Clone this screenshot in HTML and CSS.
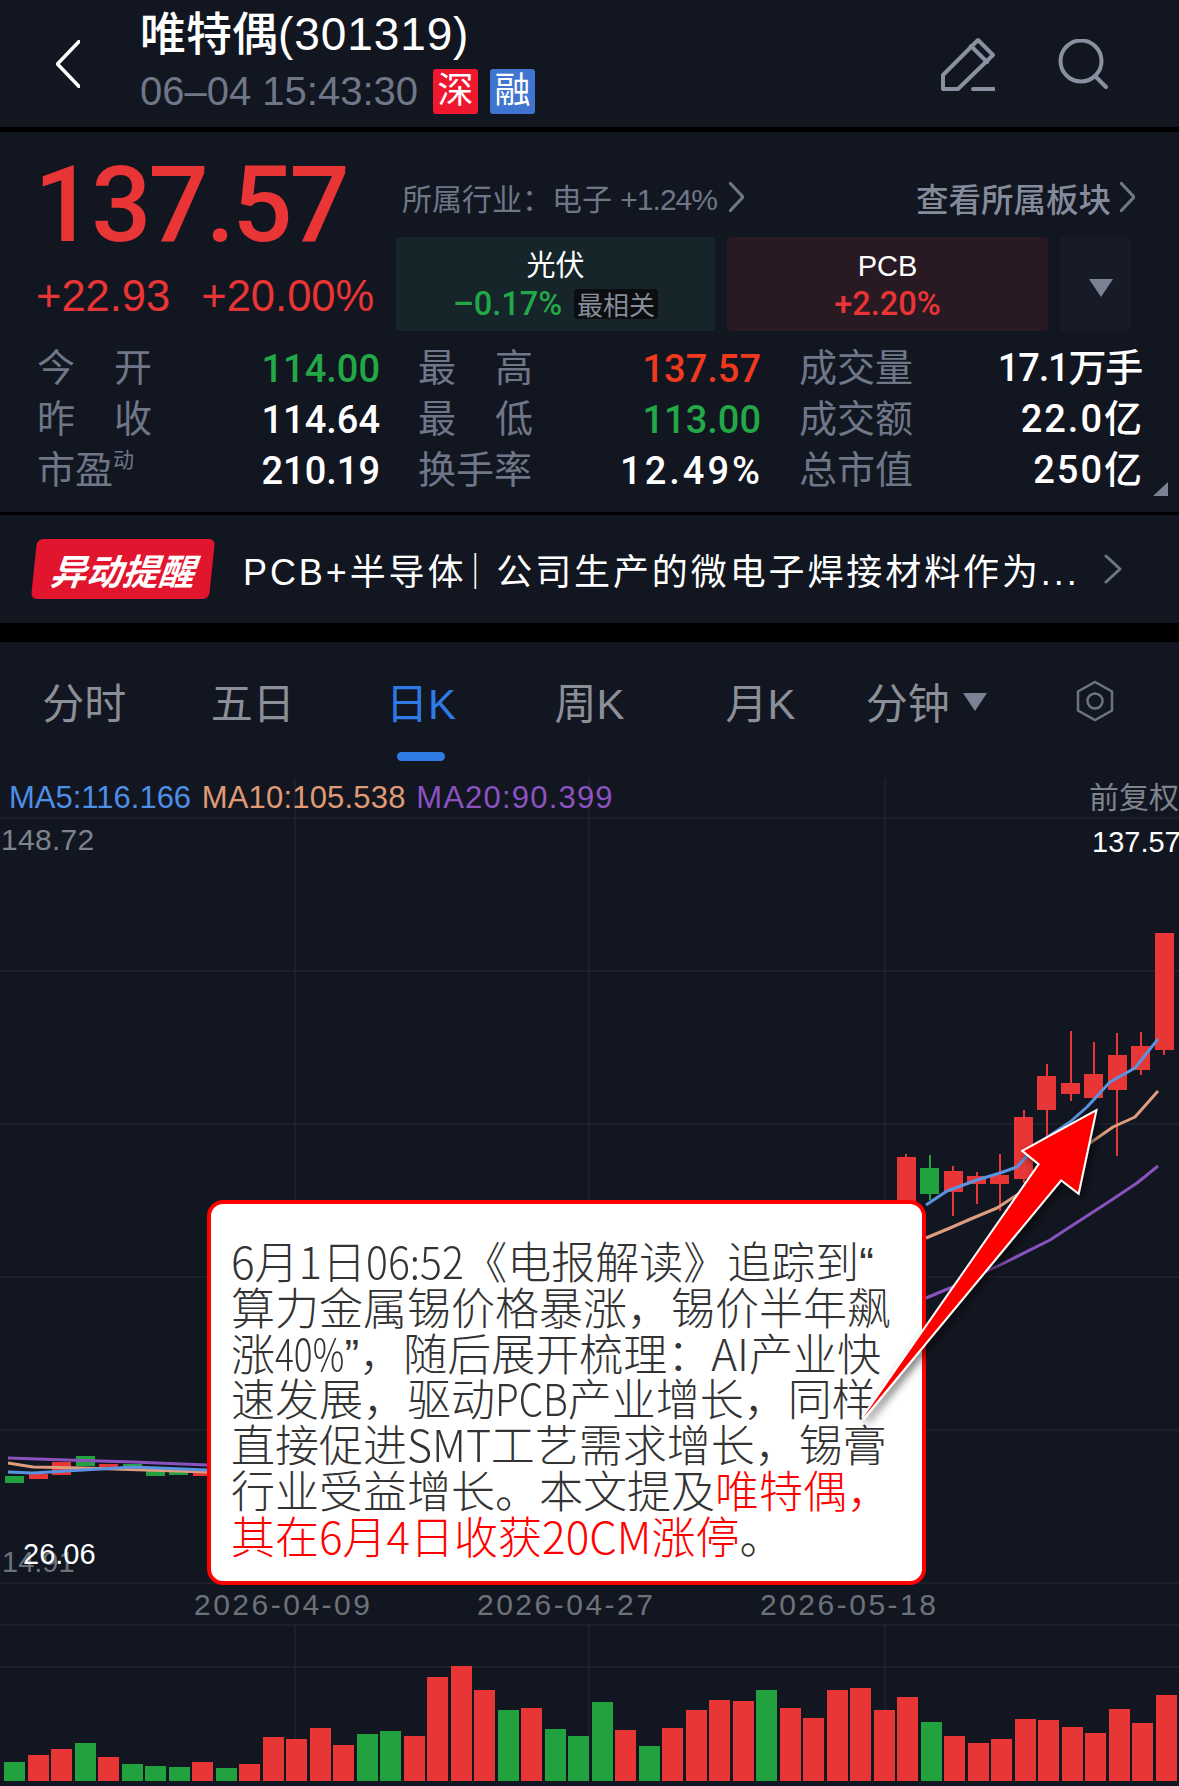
FILE: index.html
```html
<!DOCTYPE html>
<html lang="zh-CN">

<head>
    <meta charset="utf-8">
    <title>唯特偶(301319)</title>
    <link rel="stylesheet" href="styles.css">
</head>

<body>
    <header class="topbar">
        <svg class="back-icon" viewBox="0 0 24 48"><path d="M23 1.500 L1.500 24 L23 46.500"/></svg>
        <div class="stock-name">
            <div class="stock-title">唯特偶<span class="code">(301319)</span></div>
            <div class="stock-sub">
                <span class="stock-time">06–04 15:43:30</span>
                <span class="badge badge-red">深</span>
                <span class="badge badge-blue">融</span>
            </div>
        </div>
        <svg class="edit-icon" viewBox="0 0 54 54"><path d="M2 52 V38 L37 3 L52 18 L17 52 Z M30 9 L46 25"/><path d="M32 52 H53"/></svg>
        <svg class="search-icon" viewBox="0 0 50 50"><circle cx="23" cy="22" r="20.500"/><path d="M37 37 L48 48"/></svg>
    </header>

    <section class="quote">
        <div class="quote-top">
            <div class="price-box">
                <div class="price">137.57</div>
                <div class="change"><span>+22.93</span><span>+20.00%</span></div>
            </div>
            <div class="sector-box">
                <div class="sector-line">
                    <span class="industry">所属行业：电子 <span class="industry-pct">+1.24%</span></span>
                    <svg class="chevron-sm" viewBox="0 0 15 30"><path d="M1 1 L14 15 L1 29"/></svg>
                    <span class="all-sectors">查看所属板块</span>
                    <svg class="chevron-sm" viewBox="0 0 15 30"><path d="M1 1 L14 15 L1 29"/></svg>
                </div>
                <div class="sector-cards">
                    <div class="card card-green">
                        <div class="card-name">光伏</div>
                        <div class="card-pct"><span class="green">–0.17%</span><span class="card-tag">最相关</span></div>
                    </div>
                    <div class="card card-red">
                        <div class="card-name">PCB</div>
                        <div class="card-pct"><span class="red">+2.20%</span></div>
                    </div>
                    <div class="card card-more"><i class="tri"></i></div>
                </div>
            </div>
        </div>
        <div class="stats">
            <div class="stat"><span class="stat-label spread"><b>今</b><b>开</b></span><span class="stat-val green">114.00</span></div>
            <div class="stat"><span class="stat-label spread"><b>最</b><b>高</b></span><span class="stat-val high">137.57</span></div>
            <div class="stat"><span class="stat-label">成交量</span><span class="stat-val cjk-val vol-val">17.1万手</span></div>
            <div class="stat"><span class="stat-label spread"><b>昨</b><b>收</b></span><span class="stat-val">114.64</span></div>
            <div class="stat"><span class="stat-label spread"><b>最</b><b>低</b></span><span class="stat-val green">113.00</span></div>
            <div class="stat"><span class="stat-label">成交额</span><span class="stat-val cjk-val wide">22.0亿</span></div>
            <div class="stat"><span class="stat-label">市盈<sup>动</sup></span><span class="stat-val">210.19</span></div>
            <div class="stat"><span class="stat-label">换手率</span><span class="stat-val wide wide-pct">12.49%</span></div>
            <div class="stat"><span class="stat-label">总市值</span><span class="stat-val cjk-val wide">250亿</span><i class="corner"></i></div>
        </div>
    </section>

    <section class="alert">
        <div class="alert-tag"><span>异动提醒</span></div>
        <div class="alert-text">PCB+半导体<span class="alert-sep">｜</span>公司生产的微电子焊接材料作为...</div>
        <svg class="chevron-lg" viewBox="0 0 18 30"><path d="M2 2 L16 15 L2 28"/></svg>
    </section>

    <main class="chart">
        <svg class="plot" viewBox="0 642 1179 1144">
            <g class="grid">
                <path d="M0 818 H1179 M0 971 H1179 M0 1124 H1179 M0 1277 H1179 M0 1430 H1179 M0 1583 H1179 M0 1625 H1179 M0 1667 H1179"/>
                <path d="M295 778 V1583 M589 778 V1583 M885 778 V1583 M295 1625 V1781 M589 1625 V1781 M885 1625 V1781"/>
            </g>
            <g class="up">
                <rect x="29" y="1474" width="19" height="5"/>
                <rect x="52" y="1462" width="19" height="13"/>
                <rect x="99" y="1464" width="19" height="3"/>
                <rect x="193" y="1470" width="19" height="6"/>
                <rect x="905" y="1154" width="2" height="50"/><rect x="897" y="1157" width="19" height="46"/>
                <rect x="952" y="1166" width="2" height="50"/><rect x="944" y="1171" width="19" height="21"/>
                <rect x="976" y="1172" width="2" height="32"/><rect x="967" y="1176" width="19" height="8"/>
                <rect x="999" y="1154" width="2" height="57"/><rect x="990" y="1175" width="19" height="9"/>
                <rect x="1023" y="1110" width="2" height="73"/><rect x="1014" y="1117" width="19" height="62"/>
                <rect x="1046" y="1064" width="2" height="73"/><rect x="1037" y="1076" width="19" height="34"/>
                <rect x="1070" y="1031" width="2" height="70"/><rect x="1061" y="1083" width="19" height="11"/>
                <rect x="1093" y="1042" width="2" height="56"/><rect x="1084" y="1074" width="19" height="24"/>
                <rect x="1116" y="1033" width="2" height="123"/><rect x="1108" y="1055" width="19" height="35"/>
                <rect x="1140" y="1032" width="2" height="43"/><rect x="1131" y="1046" width="19" height="24"/>
                <rect x="1163" y="1040" width="2" height="15"/><rect x="1155" y="933" width="19" height="117"/>
            </g>
            <g class="down">
                <rect x="5" y="1476" width="19" height="7"/>
                <rect x="76" y="1456" width="19" height="10"/>
                <rect x="123" y="1464" width="19" height="2"/>
                <rect x="146" y="1470" width="19" height="6"/>
                <rect x="169" y="1470" width="19" height="5"/>
                <rect x="929" y="1155" width="2" height="45"/><rect x="920" y="1168" width="19" height="26"/>
            </g>
            <g class="ma">
                <polyline class="ma20" points="8,1458 67,1460 133,1462 207,1465"/>
                <polyline class="ma10" points="8,1463 33,1467 83,1468 207,1472"/>
                <polyline class="ma5" points="8,1472 33,1473 83,1470 133,1467 207,1470"/>
                <polyline class="ma20" points="926,1298 950,1288 1000,1265 1050,1240 1073,1225 1107,1203 1137,1183 1158,1166"/>
                <polyline class="ma10" points="926,1238 950,1228 973,1218 997,1208 1020,1193 1040,1177 1090,1143 1113,1127 1135,1117 1158,1091"/>
                <polyline class="ma5" points="926,1205 947,1191 977,1180 1000,1173 1017,1167 1040,1142 1070,1122 1087,1107 1110,1082 1135,1068 1158,1039"/>
            </g>
        </svg>

        <nav class="tabs">
            <div class="tab">分时</div>
            <div class="tab">五日</div>
            <div class="tab tab-on">日K</div>
            <div class="tab">周K</div>
            <div class="tab tab-month">月K</div>
            <div class="tab">分钟<i class="tri tri-tab"></i></div>
            <div class="tab">
                <svg class="hex-icon" viewBox="0 0 38 42"><path d="M19 2 L36 11.500 V30.500 L19 40 L2 30.500 V11.500 Z"/><circle cx="19" cy="21" r="7.500"/></svg>
            </div>
        </nav>

        <div class="ma-row">
            <span class="ma-blue">MA5:116.166</span>
            <span class="ma-orange">MA10:105.538</span>
            <span class="ma-purple">MA20:90.399</span>
            <span class="adjust">前复权</span>
        </div>

        <div class="axis-top"><span class="axis-max">148.72</span><span class="axis-white">137.57</span></div>

        <div class="axis-low">
            <span class="axis-min">14.91</span>
            <span class="axis-lowest">26.06</span>
        </div>

        <div class="dates">
            <span>2026-04-09</span>
            <span>2026-04-27</span>
            <span>2026-05-18</span>
        </div>

        <div class="volume">
            <i class="g" style="height:19px"></i><i class="r" style="height:26px"></i><i class="r" style="height:32px"></i><i class="g" style="height:38px"></i><i class="r" style="height:24px"></i>
            <i class="g" style="height:17px"></i><i class="g" style="height:15px"></i><i class="g" style="height:14px"></i><i class="r" style="height:19px"></i><i class="g" style="height:13px"></i>
            <i class="r" style="height:17px"></i><i class="r" style="height:44px"></i><i class="r" style="height:42px"></i><i class="r" style="height:53px"></i><i class="r" style="height:36px"></i>
            <i class="g" style="height:47px"></i><i class="g" style="height:50px"></i><i class="r" style="height:45px"></i><i class="r" style="height:104px"></i><i class="r" style="height:115px"></i>
            <i class="r" style="height:91px"></i><i class="g" style="height:71px"></i><i class="r" style="height:73px"></i><i class="g" style="height:52px"></i><i class="g" style="height:45px"></i>
            <i class="g" style="height:79px"></i><i class="r" style="height:51px"></i><i class="g" style="height:35px"></i><i class="r" style="height:53px"></i><i class="r" style="height:71px"></i>
            <i class="r" style="height:81px"></i><i class="r" style="height:80px"></i><i class="g" style="height:91px"></i><i class="r" style="height:73px"></i><i class="r" style="height:63px"></i>
            <i class="r" style="height:91px"></i><i class="r" style="height:93px"></i><i class="r" style="height:71px"></i><i class="r" style="height:84px"></i><i class="g" style="height:59px"></i>
            <i class="r" style="height:45px"></i><i class="r" style="height:38px"></i><i class="r" style="height:42px"></i><i class="r" style="height:62px"></i><i class="r" style="height:61px"></i>
            <i class="r" style="height:54px"></i><i class="r" style="height:48px"></i><i class="r" style="height:72px"></i><i class="r" style="height:58px"></i><i class="r" style="height:86px"></i>
        </div>

        <div class="callout">
            <div class="callout-line">6月1日<span class="narrow n-time">06:52</span>《电报解读》追踪到<span class="quote-mark">“</span></div>
            <div class="callout-line">算力金属锡价格暴涨，锡价半年飙</div>
            <div class="callout-line">涨<span class="narrow n-pct">40%</span><span class="quote-mark">”</span>，随后展开梳理：AI产业快</div>
            <div class="callout-line">速发展，驱动<span class="narrow n-pcb">PCB</span>产业增长，同样</div>
            <div class="callout-line">直接促进<span class="narrow n-smt">SMT</span>工艺需求增长，锡膏</div>
            <div class="callout-line">行业受益增长。本文提及<em>唯特偶，</em></div>
            <div class="callout-line"><em>其在6月4日收获<span class="narrow">20CM</span>涨停</em>。</div>
        </div>

        <svg class="arrow" viewBox="0 642 1179 1144">
            <defs>
                <filter id="arrowShadow" x="-20%" y="-20%" width="150%" height="150%">
                    <feDropShadow dx="3" dy="4" stdDeviation="4" flood-color="#000" flood-opacity="0.55"/>
                </filter>
            </defs>
            <path d="M1095 1112 L1024 1151 L1040 1164 L863 1418 L1061 1179 L1078 1192 Z" filter="url(#arrowShadow)"/>
        </svg>
    </main>
</body>

</html>
```

FILE: styles.css
```css
* {
    box-sizing: border-box;
}

html,
body {
    margin: 0;
    padding: 0;
}

body {
    width: 1179px;
    height: 1786px;
    overflow: hidden;
    background-color: #000;
    color: #fff;
    font-family: "Liberation Sans", "Noto Sans CJK SC", sans-serif;
}

svg path,
svg circle {
    fill: none;
}

.green {
    color: #22a846;
}

.red {
    color: #e93535;
}

/* top bar */
.topbar {
    display: flex;
    align-items: center;
    height: 127px;
    padding-left: 56px;
    background-color: #121620;
}

.back-icon {
    width: 24px;
    height: 48px;
}

.back-icon path {
    stroke: #fff;
    stroke-width: 3.500;
    stroke-linecap: round;
    stroke-linejoin: round;
}

.stock-name {
    margin-left: 60px;
    flex: 1;
}

.stock-title {
    font-size: 46px;
    font-weight: 500;
    line-height: 50px;
    margin-top: -4px;
}

.code {
    letter-spacing: 0.900px;
}

.stock-sub {
    display: flex;
    align-items: center;
    margin-top: 10px;
}

.stock-time {
    width: 293px;
    font-size: 40px;
    line-height: 45px;
    color: #6f7688;
    white-space: nowrap;
}

.badge {
    width: 45px;
    height: 45px;
    margin-right: 12px;
    border-radius: 3px;
    font-size: 36px;
    line-height: 44px;
    text-align: center;
}

.badge-red {
    background-color: #f0182f;
}

.badge-blue {
    background-color: #3f74d0;
}

.edit-icon {
    width: 54px;
    height: 54px;
    margin-right: 63px;
}

.search-icon {
    width: 50px;
    height: 50px;
    margin-right: 71px;
}

.edit-icon path,
.search-icon circle,
.search-icon path {
    stroke: #8a90a0;
    stroke-width: 4;
    stroke-linecap: round;
    stroke-linejoin: round;
}

/* quote block */
.quote {
    height: 380px;
    margin-top: 5px;
    background-color: #121620;
}

.quote-top {
    display: flex;
    height: 199px;
}

.price-box {
    width: 396px;
    padding-left: 34px;
}

.price {
    margin-top: 13px;
    font-family: Roboto, "Liberation Sans", sans-serif;
    font-weight: 500;
    font-size: 106px;
    line-height: 120px;
    letter-spacing: -3px;
    color: #e93535;
}

.change {
    display: flex;
    gap: 31px;
    margin-top: 6px;
    padding-left: 2px;
    font-size: 43.500px;
    line-height: 50px;
    color: #e93535;
}

.sector-box {
    flex: 1;
}

.sector-line {
    display: flex;
    align-items: center;
    height: 30px;
    margin-top: 50px;
    padding-left: 6px;
}

.industry {
    width: 318px;
    font-size: 30px;
    white-space: nowrap;
    color: #6f7688;
}

.industry-pct {
    letter-spacing: -1px;
}

.all-sectors {
    margin-left: 172px;
    font-size: 32.500px;
    font-weight: 500;
    color: #858b9b;
    white-space: nowrap;
}

.chevron-sm {
    width: 15px;
    height: 30px;
    margin-left: 9px;
}

.chevron-sm path,
.chevron-lg path {
    stroke: #6f7688;
    stroke-width: 3;
    stroke-linecap: round;
    stroke-linejoin: round;
}

.sector-cards {
    display: flex;
    gap: 12px;
    margin-top: 25px;
}

.card {
    width: 319px;
    height: 94px;
    border-radius: 4px;
    text-align: center;
}

.card-green {
    background-color: #15252a;
}

.card-red {
    width: 321px;
    background-color: #291922;
}

.card-more {
    display: flex;
    align-items: center;
    justify-content: center;
    width: 71px;
    padding: 8px 0 0 11px;
    background-color: #161b27;
}

.tri {
    display: block;
    width: 0;
    height: 0;
    border-left: 12px solid transparent;
    border-right: 12px solid transparent;
    border-top: 18px solid #7b8294;
}

.tri-tab {
    margin-top: 2px;
}

.card-name {
    margin-top: 12px;
    font-size: 29px;
    line-height: 34px;
}

.card-pct {
    display: flex;
    align-items: center;
    justify-content: center;
    gap: 12px;
    margin-top: 5px;
    font-family: Roboto, "Liberation Sans", sans-serif;
    font-size: 32.500px;
    line-height: 32px;
    font-weight: 500;
}

.card-tag {
    width: 84px;
    height: 30px;
    border-radius: 4px;
    background-color: #0b0d10;
    color: #868c98;
    font-family: "Noto Sans CJK SC", sans-serif;
    font-size: 26px;
    font-weight: 400;
    line-height: 30px;
    text-align: center;
}

.stats {
    display: grid;
    grid-template-columns: repeat(3, 341px);
    column-gap: 40px;
    padding: 12px 0 0 37px;
}

.stat {
    position: relative;
    display: flex;
    justify-content: space-between;
    align-items: center;
    height: 51px;
}

.stat-label {
    display: flex;
    width: 115px;
    font-size: 38px;
    line-height: 51px;
    color: #6f7688;
    white-space: nowrap;
}

.spread {
    justify-content: space-between;
}

.spread b {
    font-weight: 400;
}

sup {
    font-size: 21px;
    line-height: 30px;
}

.stat-val {
    margin-right: -2px;
    font-family: Roboto, "Noto Sans CJK SC", sans-serif;
    font-size: 38px;
    font-weight: 500;
    white-space: nowrap;
}

.high {
    color: #f0391f;
}

.cjk-val {
    margin-top: -8px;
}

.wide {
    margin-right: -4px;
    letter-spacing: 2px;
}

.wide-pct {
    letter-spacing: 3px;
}

.vol-val {
    letter-spacing: -1.200px;
}

.corner {
    position: absolute;
    right: -28px;
    bottom: 0;
    width: 0;
    height: 0;
    border-bottom: 14px solid #7b8294;
    border-left: 15px solid transparent;
}

/* alert strip */
.alert {
    display: flex;
    align-items: center;
    height: 108px;
    margin-top: 3px;
    padding-left: 34px;
    background-color: #121620;
}

.alert-tag {
    display: flex;
    align-items: center;
    justify-content: center;
    width: 178px;
    height: 60px;
    border-radius: 6px;
    background-color: #e2152e;
    transform: skewX(-6deg);
}

.alert-tag span {
    font-size: 36px;
    font-weight: 700;
    font-style: italic;
}

.alert-text {
    margin-left: 31px;
    font-size: 36px;
    letter-spacing: 2.900px;
    white-space: nowrap;
}

.alert-sep {
    margin-left: -9px;
}

.chevron-lg {
    width: 18px;
    height: 30px;
    margin-left: 24px;
}

/* chart */
.chart {
    position: relative;
    display: flex;
    flex-direction: column;
    height: 1144px;
    margin-top: 19px;
    background-color: #121620;
}

.plot,
.arrow {
    position: absolute;
    left: 0;
    top: 0;
    width: 1179px;
    height: 1144px;
}

.grid path {
    stroke: #272b35;
    stroke-width: 1;
}

.up rect {
    fill: #e83636;
}

.down rect {
    fill: #22a23e;
}

.ma polyline {
    fill: none;
    stroke-width: 3;
    stroke-linejoin: round;
}

.ma5 {
    stroke: #5b93e0;
}

.ma10 {
    stroke: #dd9d7e;
}

.ma20 {
    stroke: #8a52bd;
}

.tabs {
    position: relative;
    display: grid;
    grid-template-columns: repeat(7, 1fr);
    height: 136px;
    padding-bottom: 19px;
}

.tab {
    position: relative;
    display: flex;
    align-items: center;
    justify-content: center;
    gap: 13px;
    font-size: 42px;
    color: #8b8f98;
}

.tab-month {
    padding-left: 5px;
}

.tab-on {
    color: #2f7be6;
}

.tab-on::after {
    content: "";
    position: absolute;
    left: 50%;
    bottom: -2px;
    width: 48px;
    height: 9px;
    margin-left: -24px;
    border-radius: 5px;
    background-color: #2f7be6;
}

.hex-icon {
    width: 38px;
    height: 42px;
}

.hex-icon path,
.hex-icon circle {
    stroke: #6d7380;
    stroke-width: 2.500;
}

.ma-row {
    position: relative;
    display: flex;
    gap: 10.500px;
    height: 40px;
    padding-left: 9px;
    font-size: 31px;
    line-height: 40px;
}

.ma-blue {
    color: #4e8fe6;
}

.ma-orange {
    color: #e09a74;
    letter-spacing: 0.200px;
}

.ma-purple {
    color: #8d52c2;
    letter-spacing: 1.200px;
}

.adjust {
    margin-left: auto;
    font-size: 30px;
    color: #7e838c;
}

.axis-top {
    position: relative;
    display: flex;
    justify-content: space-between;
    padding: 4px 0 0 1px;
    font-size: 29px;
    line-height: 36px;
    color: #7e838c;
}

.axis-max {
    font-size: 30px;
    letter-spacing: 0.300px;
}

.axis-white {
    margin-top: 2px;
    color: #fff;
    white-space: nowrap;
    width: 87px;
}

.axis-low {
    position: absolute;
    left: 0;
    top: 900px;
    width: 120px;
    height: 36px;
    font-size: 29px;
    line-height: 30px;
}

.axis-min {
    position: absolute;
    left: 2px;
    top: 5px;
    color: #6d7278;
}

.axis-lowest {
    position: absolute;
    left: 23px;
    top: -3px;
    color: #fff;
}

.dates {
    position: absolute;
    left: 0;
    top: 946px;
    display: flex;
    padding-left: 194px;
    font-size: 30px;
    line-height: 34px;
    letter-spacing: 2.500px;
    color: #6d7278;
}

.dates span {
    width: 283px;
}

.volume {
    position: absolute;
    left: 4px;
    bottom: 5px;
    display: flex;
    align-items: flex-end;
    gap: 2.500px;
}

.volume i {
    display: block;
    width: 21px;
}

.volume .r {
    background-color: #e83636;
}

.volume .g {
    background-color: #22a23e;
}

/* annotation */
.callout {
    position: absolute;
    left: 207px;
    top: 558px;
    width: 719px;
    height: 385px;
    padding: 34px 0 0 20px;
    border: 4px solid #f00;
    border-radius: 16px;
    background-color: #fff;
    color: #333;
    font-family: "Noto Sans CJK SC", sans-serif;
    font-size: 44px;
    font-weight: 300;
    line-height: 45.800px;
    white-space: nowrap;
}

.callout-line {
    height: 45.800px;
}

.callout em {
    font-style: normal;
    color: #f00;
}

/* latin in the note is condensed, no narrow family installed */
.narrow {
    display: inline-block;
    transform-origin: left center;
}

.n-time {
    margin-right: -8px;
    transform: scaleX(0.93);
}

.n-pct {
    margin-right: -17px;
    transform: scaleX(0.8);
}

.n-pcb {
    margin-right: -10px;
    transform: scaleX(0.88);
}

.n-smt {
    margin-right: -2px;
    transform: scaleX(0.98);
}

.quote-mark {
    font-family: "Liberation Sans", sans-serif;
    font-weight: 400;
    line-height: 0;
}

.arrow path {
    fill: #f00;
    stroke: #fff;
    stroke-width: 4;
    stroke-linejoin: miter;
    paint-order: stroke;
}
```
